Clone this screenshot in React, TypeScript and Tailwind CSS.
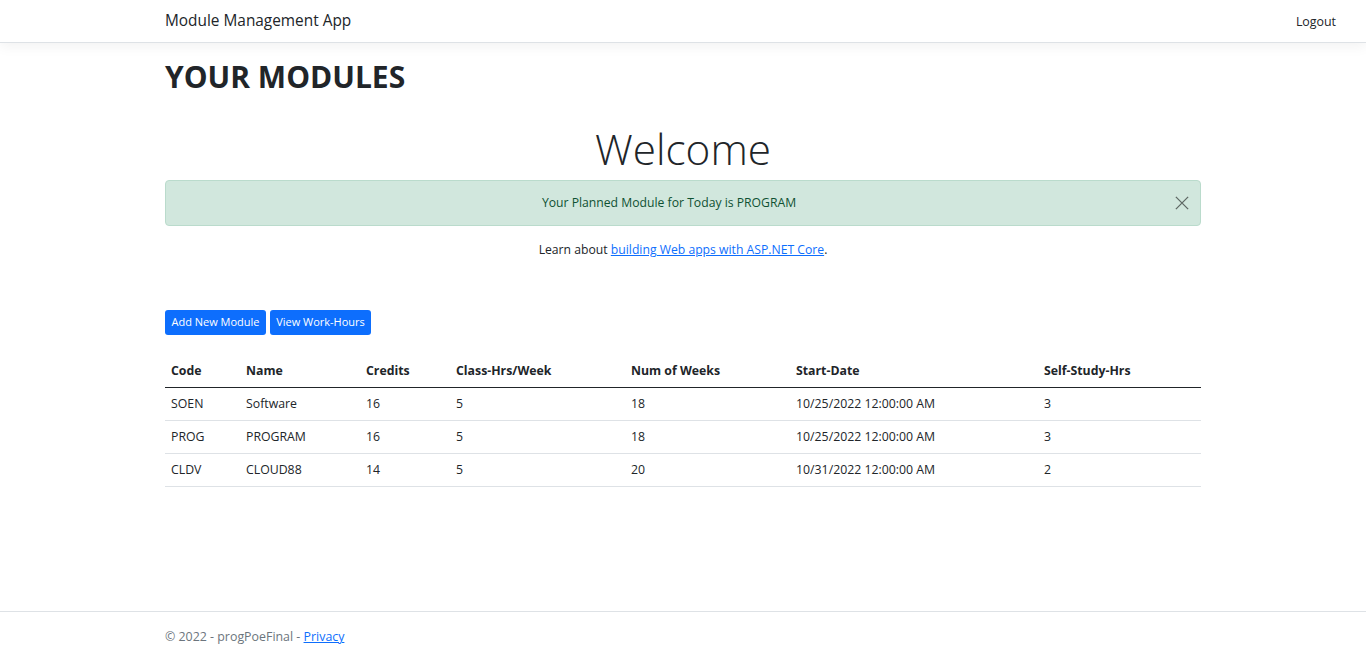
import React from "react";

type ModuleRow = {
  code: string;
  name: string;
  credits: number;
  classHrs: number;
  weeks: number;
  start: string;
  selfStudy: number;
};

const modules: ModuleRow[] = [
  { code: "SOEN", name: "Software", credits: 16, classHrs: 5, weeks: 18, start: "10/25/2022 12:00:00 AM", selfStudy: 3 },
  { code: "PROG", name: "PROGRAM", credits: 16, classHrs: 5, weeks: 18, start: "10/25/2022 12:00:00 AM", selfStudy: 3 },
  { code: "CLDV", name: "CLOUD88", credits: 14, classHrs: 5, weeks: 20, start: "10/31/2022 12:00:00 AM", selfStudy: 2 },
];

// column widths measured off the layout
const headers = [
  { label: "Code", w: "w-[75px]" },
  { label: "Name", w: "w-[120px]" },
  { label: "Credits", w: "w-[90px]" },
  { label: "Class-Hrs/Week", w: "w-[175px]" },
  { label: "Num of Weeks", w: "w-[165px]" },
  { label: "Start-Date", w: "w-[248px]" },
  { label: "Self-Study-Hrs", w: "" },
];

export default function App() {
  return (
    <div className="flex min-h-screen flex-col bg-white font-['Open_Sans',sans-serif] text-[#212529]">
      <header className="grid h-[43px] grid-cols-[1fr_1036px_1fr] items-center border-b border-[#dee2e6] bg-white shadow-[0_4px_12px_rgba(0,0,0,0.05)]">
        <div />
        <a className="text-[15.4px] text-[#212529]">Module Management App</a>
        <div className="flex justify-end pr-[30px] pt-[2px]">
          <a className="text-[12.4px] text-[#212529]">Logout</a>
        </div>
      </header>

      <main className="mx-auto w-[1036px] flex-1">
        <h1 className="mt-[12px] text-[30px] font-bold leading-[44px]">YOUR MODULES</h1>

        <div className="text-center">
          <h2 className="mt-[21px] text-[42.3px] font-light leading-[58px]">Welcome</h2>
          <div className="mt-[2px] flex h-[46px] items-center justify-center rounded-[4px] border border-[#badbcc] bg-[#d1e7dd] text-[12.2px] text-[#0f5132]">
            <span className="flex-1">Your Planned Module for Today is PROGRAM</span>
            <button className="mr-[8px] flex h-[20px] w-[20px] items-center justify-center opacity-55">
              <svg width="14" height="14" viewBox="0 0 16 16" fill="none" stroke="#000" strokeWidth="1.5">
                <path d="M1 1l14 14M15 1L1 15" />
              </svg>
            </button>
          </div>
          <p className="mt-[14px] text-[12.2px] leading-[20px]">
            Learn about{" "}
            <a className="text-[#0d6efd] underline">building Web apps with ASP.NET Core</a>.
          </p>
        </div>

        <div className="mt-[50px] flex gap-[4px]">
          <button className="h-[25px] w-[101px] rounded-[3px] bg-[#0d6efd] text-[11px] text-white">Add New Module</button>
          <button className="h-[25px] w-[101px] rounded-[3px] bg-[#0d6efd] text-[11px] text-white">View Work-Hours</button>
        </div>

        <table className="mt-[20px] w-full border-collapse text-left text-[12.3px]">
          <thead>
            <tr className="h-[32px] border-b-[1.5px] border-[#212529]">
              {headers.map((h) => (
                <th key={h.label} className={`${h.w} px-[6px] font-bold`}>
                  {h.label}
                </th>
              ))}
            </tr>
          </thead>
          <tbody>
            {modules.map((m) => (
              <tr key={m.code} className="h-[33px] border-b border-[#dee2e6]">
                <td className="px-[6px] pt-[2px]">{m.code}</td>
                <td className="px-[6px] pt-[2px]">{m.name}</td>
                <td className="px-[6px] pt-[2px]">{m.credits}</td>
                <td className="px-[6px] pt-[2px]">{m.classHrs}</td>
                <td className="px-[6px] pt-[2px]">{m.weeks}</td>
                <td className="px-[6px] pt-[2px]">{m.start}</td>
                <td className="px-[6px] pt-[2px]">{m.selfStudy}</td>
              </tr>
            ))}
          </tbody>
        </table>
      </main>

      <footer className="h-[44px] border-t border-[#dee2e6]">
        <div className="mx-auto flex h-full w-[1036px] items-center pt-[8px] text-[12.4px] text-[#6c757d]">
          <span>
            © 2022 - progPoeFinal - <a className="text-[#0d6efd] underline">Privacy</a>
          </span>
        </div>
      </footer>
    </div>
  );
}
